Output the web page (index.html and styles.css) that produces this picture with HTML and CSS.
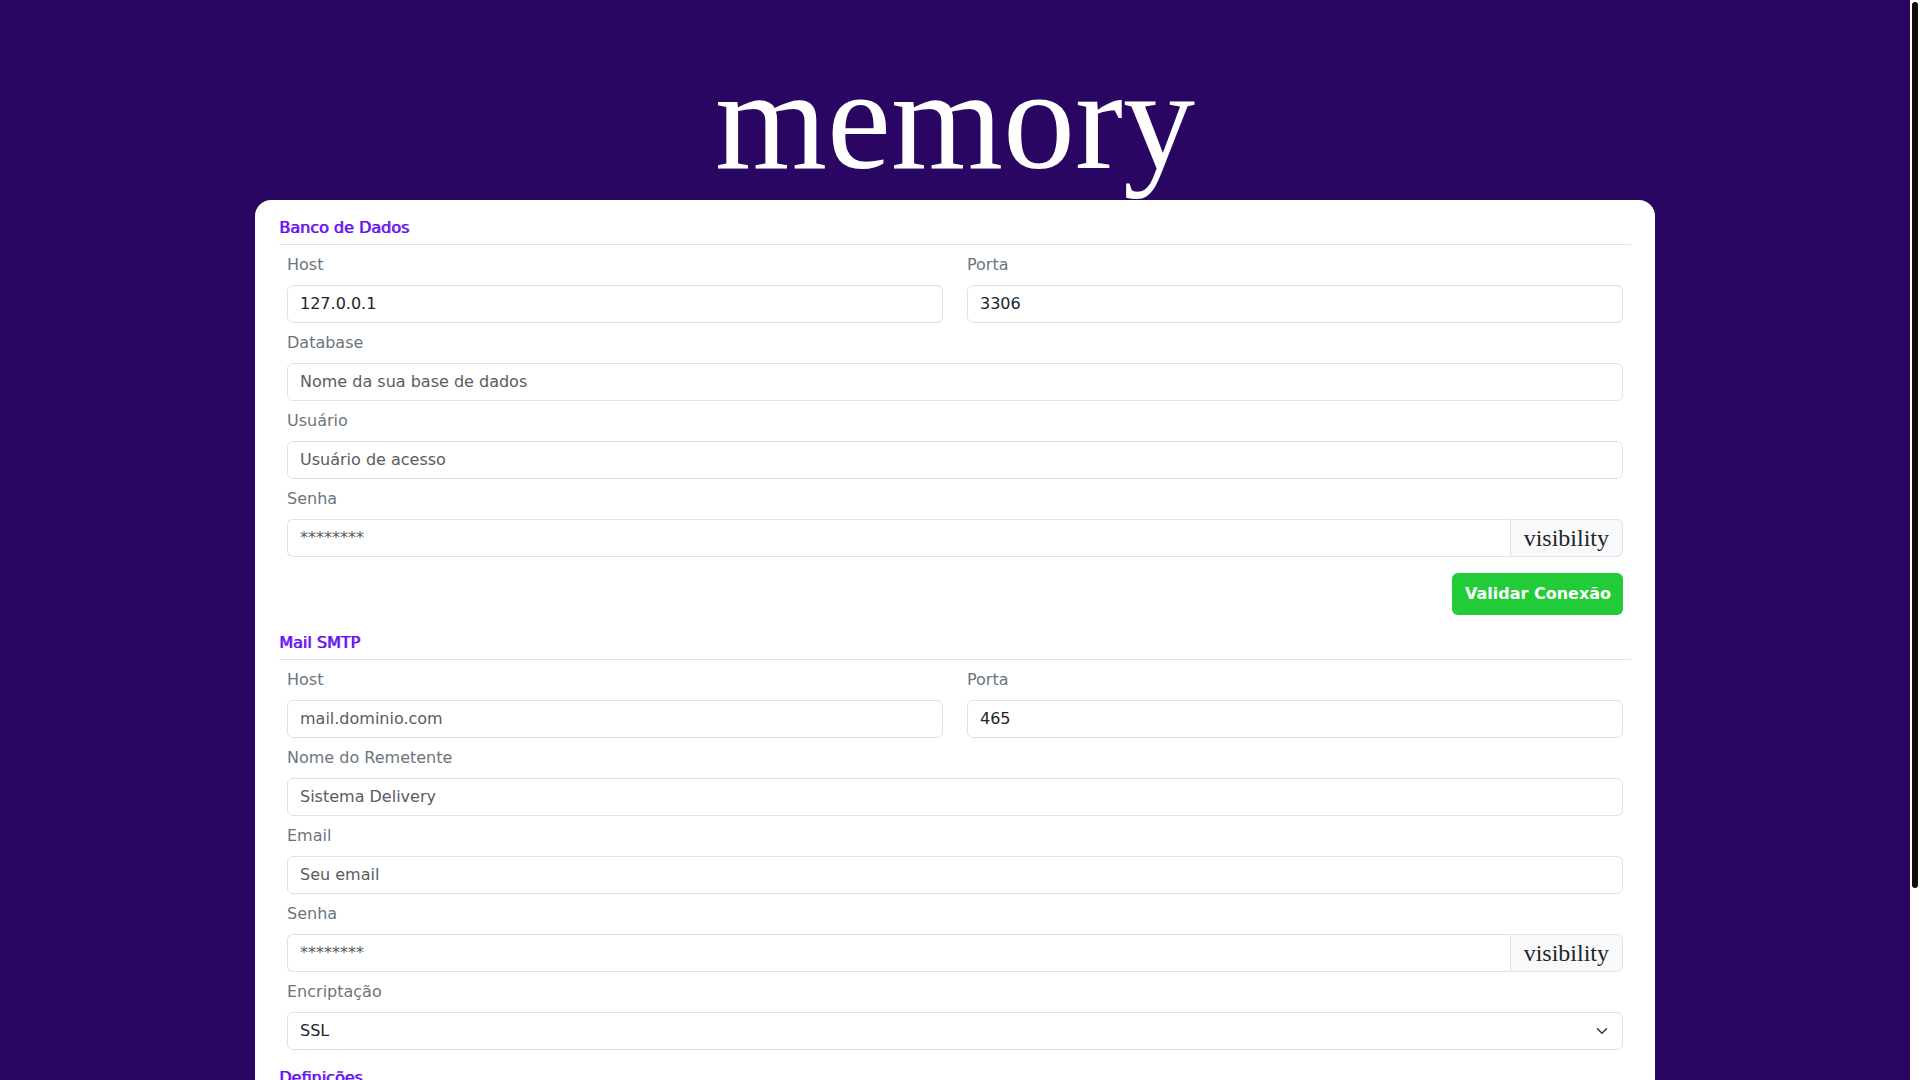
FILE: index.html
```
<!DOCTYPE html>
<html lang="pt-BR">
<head>
<meta charset="utf-8">
<meta name="viewport" content="width=device-width, initial-scale=1">
<title>memory</title>
<link rel="stylesheet" href="styles.css">
</head>
<body>
<header class="brand">memory</header>
<main class="card">
  <form>
    <section class="group">
      <h2 class="group-title">Banco de Dados</h2>
      <div class="fields">
        <div class="field half"><label for="db-host">Host</label><input class="control" id="db-host" type="text" value="127.0.0.1"></div>
        <div class="field half"><label for="db-port">Porta</label><input class="control" id="db-port" type="text" value="3306"></div>
        <div class="field"><label for="db-name">Database</label><input class="control" id="db-name" type="text" placeholder="Nome da sua base de dados"></div>
        <div class="field"><label for="db-user">Usuário</label><input class="control" id="db-user" type="text" placeholder="Usuário de acesso"></div>
        <div class="field"><label for="db-pass">Senha</label>
          <div class="input-group"><input class="control" id="db-pass" type="password" placeholder="********"><button class="addon" type="button">visibility</button></div>
        </div>
      </div>
      <div class="actions"><button class="btn" type="button">Validar Conexão</button></div>
    </section>
    <section class="group">
      <h2 class="group-title">Mail SMTP</h2>
      <div class="fields">
        <div class="field half"><label for="mail-host">Host</label><input class="control" id="mail-host" type="text" placeholder="mail.dominio.com"></div>
        <div class="field half"><label for="mail-port">Porta</label><input class="control" id="mail-port" type="text" value="465"></div>
        <div class="field"><label for="mail-name">Nome do Remetente</label><input class="control" id="mail-name" type="text" placeholder="Sistema Delivery"></div>
        <div class="field"><label for="mail-email">Email</label><input class="control" id="mail-email" type="email" placeholder="Seu email"></div>
        <div class="field"><label for="mail-pass">Senha</label>
          <div class="input-group"><input class="control" id="mail-pass" type="password" placeholder="********"><button class="addon" type="button">visibility</button></div>
        </div>
        <div class="field"><label for="mail-enc">Encriptação</label>
          <div class="select-wrap">
            <select class="control" id="mail-enc"><option>SSL</option></select>
            <svg class="chevron" viewBox="0 0 16 16" aria-hidden="true"><path d="m2 5 6 6 6-6"/></svg>
          </div>
        </div>
      </div>
    </section>
    <section class="group">
      <h2 class="group-title">Definições</h2>
    </section>
  </form>
</main>
<div class="scrollbar" aria-hidden="true"><div class="scrollbar-thumb"></div></div>
</body>
</html>
```
FILE: styles.css
```
* { box-sizing: border-box; }

html { scrollbar-width: none; }

body {
  margin: 0;
  padding: 48px 34px 48px 24px;
  background: #290661;
  color: #212529;
  font: 16px/24px "DejaVu Sans", sans-serif;
}

/* Page scrollbar, drawn over the right edge of the window */
.scrollbar {
  position: fixed;
  top: 0;
  right: 0;
  bottom: 0;
  width: 10px;
  padding: 2px;
  background: #fff;
}

.scrollbar-thumb {
  height: calc(82% + 4px);
  background: #0d0d0d;
  border-radius: 3px;
}

.brand {
  margin-bottom: 8px;
  color: #fff;
  font: 144px/144px "Liberation Serif", serif;
  text-align: center;
}

.card {
  max-width: 1400px;
  margin: 0 auto;
  padding: 16px 24px 144px;
  background: #fff;
  border-radius: 16px;
}

.group { margin-bottom: 16px; }

.group-title {
  margin: 0;
  padding-bottom: 4px;
  border-bottom: 1px solid #dee2e6;
  color: #6610f2;
  font-size: 16px;
  font-weight: 400;
  text-shadow: 1px 0 rgba(102, 16, 242, 0.8);
}

.fields {
  display: grid;
  grid-template-columns: 1fr 1fr;
  column-gap: 24px;
  padding: 0 8px;
}

.field {
  grid-column: 1 / -1;
  padding-top: 8px;
}

.half { grid-column: auto; }

.field label {
  display: block;
  margin-bottom: 8px;
  color: #6c757d;
}

.control {
  display: block;
  width: 100%;
  height: 38px;
  padding: 5px 12px 7px;
  border: 1px solid #dee2e6;
  border-radius: 6px;
  background: #fff;
  color: #212529;
  font: inherit;
  appearance: none;
}

.control::placeholder { color: #595c5f; opacity: 1; }

.input-group { display: flex; }

.input-group .control {
  flex: 1;
  min-width: 0;
  border-right: 0;
  border-radius: 6px 0 0 6px;
}

.addon {
  height: 38px;
  padding: 0 13px;
  border: 1px solid #dee2e6;
  border-radius: 0 6px 6px 0;
  background: #f8f9fa;
  color: #212529;
  font: 24px/24px "Liberation Serif", serif;
}

.select-wrap {
  display: grid;
  align-items: center;
}

.select-wrap .control,
.chevron { grid-area: 1 / 1; }

.select-wrap .control { padding: 6px 12px; }

.chevron {
  justify-self: end;
  width: 12px;
  height: 16px;
  margin-right: 15px;
  fill: none;
  stroke: #343a40;
  stroke-width: 2;
  stroke-linecap: round;
  stroke-linejoin: round;
  pointer-events: none;
}

.actions {
  display: flex;
  justify-content: flex-end;
  padding: 16px 8px 0;
}

.btn {
  height: 42px;
  padding: 0 12px 0 13px;
  border: 0;
  border-radius: 6px;
  background: #22cb38;
  color: #fff;
  font: inherit;
  font-weight: 700;
}
```
